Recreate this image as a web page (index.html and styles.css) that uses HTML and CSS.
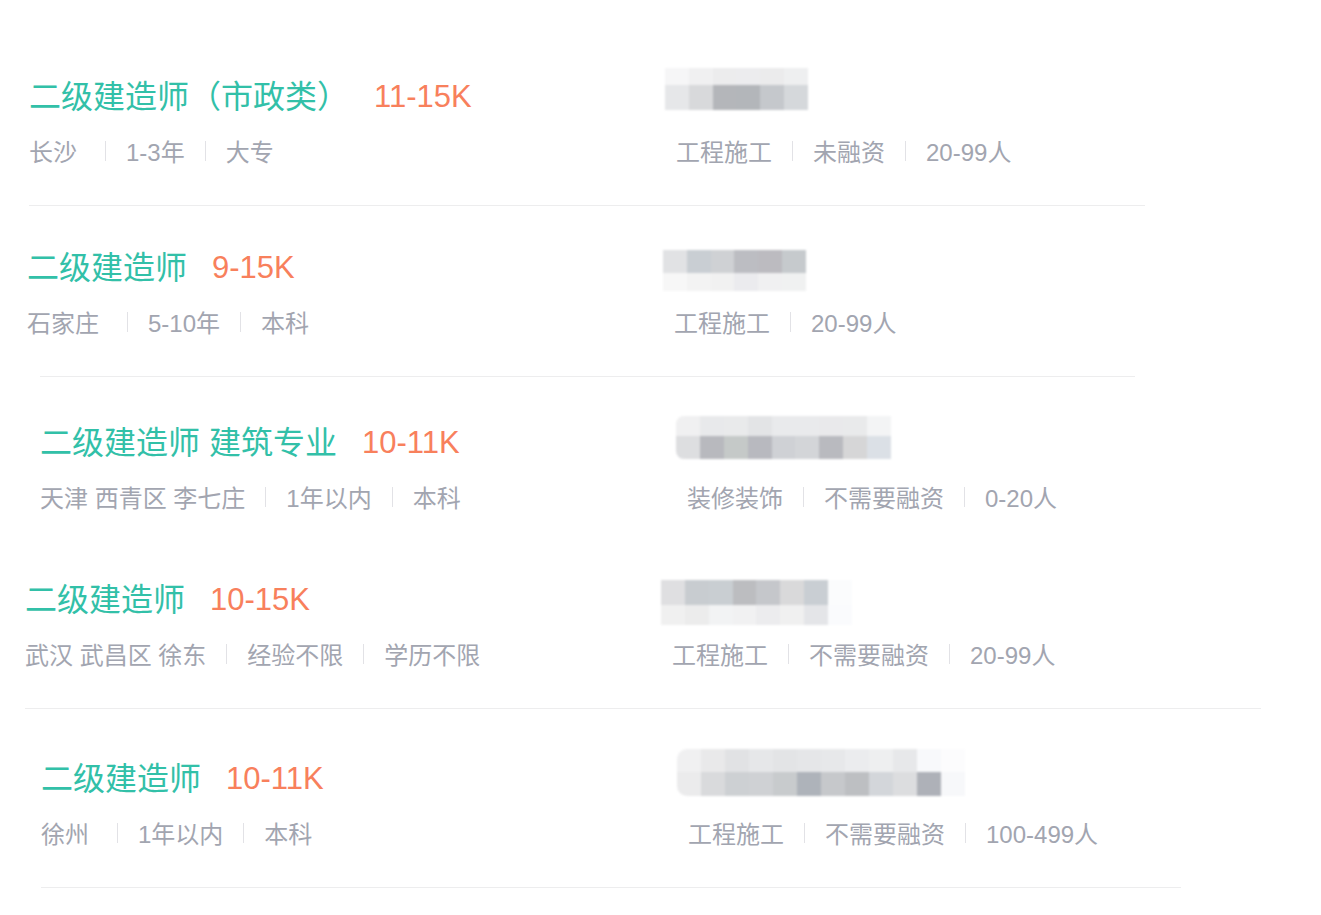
FILE: index.html
```html
<!DOCTYPE html>
<html lang="zh-CN">
<head>
<meta charset="utf-8">
<title>职位列表</title>
<link rel="stylesheet" href="styles.css">
</head>
<body>
<ul class="job-list">
  <li class="job job-1">
    <div class="job-body">
      <div class="job-main">
        <div class="title"><span class="name">二级建造师（市政类）</span><span class="salary">11-15K</span></div>
        <div class="meta"><span class="first">长沙</span><i class="sep"></i><span>1-3年</span><i class="sep"></i><span>大专</span></div>
      </div>
      <div class="job-side">
        <div class="logo-wrap"><div class="logo logo-1"><div class="row top"></div><div class="row bottom"></div></div></div>
        <div class="meta side-meta"><span>工程施工</span><i class="sep"></i><span>未融资</span><i class="sep"></i><span>20-99人</span></div>
      </div>
    </div>
    <div class="job-line"></div>
  </li>
  <li class="job job-2">
    <div class="job-body">
      <div class="job-main">
        <div class="title"><span class="name">二级建造师</span><span class="salary">9-15K</span></div>
        <div class="meta"><span class="first">石家庄</span><i class="sep"></i><span>5-10年</span><i class="sep"></i><span>本科</span></div>
      </div>
      <div class="job-side">
        <div class="logo-wrap"><div class="logo logo-2"><div class="row top"></div><div class="row bottom"></div></div></div>
        <div class="meta side-meta"><span>工程施工</span><i class="sep"></i><span>20-99人</span></div>
      </div>
    </div>
    <div class="job-line"></div>
  </li>
  <li class="job job-3">
    <div class="job-body">
      <div class="job-main">
        <div class="title"><span class="name">二级建造师 建筑专业</span><span class="salary">10-11K</span></div>
        <div class="meta"><span>天津 西青区 李七庄</span><i class="sep"></i><span>1年以内</span><i class="sep"></i><span>本科</span></div>
      </div>
      <div class="job-side">
        <div class="logo-wrap"><div class="logo logo-3"><div class="row top"></div><div class="row bottom"></div></div></div>
        <div class="meta side-meta"><span>装修装饰</span><i class="sep"></i><span>不需要融资</span><i class="sep"></i><span>0-20人</span></div>
      </div>
    </div>
    <div class="job-line"></div>
  </li>
  <li class="job job-4">
    <div class="job-body">
      <div class="job-main">
        <div class="title"><span class="name">二级建造师</span><span class="salary">10-15K</span></div>
        <div class="meta"><span>武汉 武昌区 徐东</span><i class="sep"></i><span>经验不限</span><i class="sep"></i><span>学历不限</span></div>
      </div>
      <div class="job-side">
        <div class="logo-wrap"><div class="logo logo-4"><div class="row top"></div><div class="row bottom"></div></div></div>
        <div class="meta side-meta"><span>工程施工</span><i class="sep"></i><span>不需要融资</span><i class="sep"></i><span>20-99人</span></div>
      </div>
    </div>
    <div class="job-line"></div>
  </li>
  <li class="job job-5">
    <div class="job-body">
      <div class="job-main">
        <div class="title"><span class="name">二级建造师</span><span class="salary">10-11K</span></div>
        <div class="meta"><span class="first">徐州</span><i class="sep"></i><span>1年以内</span><i class="sep"></i><span>本科</span></div>
      </div>
      <div class="job-side">
        <div class="logo-wrap"><div class="logo logo-5"><div class="row top"></div><div class="row bottom"></div></div></div>
        <div class="meta side-meta"><span>工程施工</span><i class="sep"></i><span>不需要融资</span><i class="sep"></i><span>100-499人</span></div>
      </div>
    </div>
    <div class="job-line"></div>
  </li>
</ul>
</body>
</html>
```

FILE: styles.css
```css
html, body {
  margin: 0;
  padding: 0;
  background: #ffffff;
}

body {
  font-family: "Liberation Sans", "Noto Sans CJK SC", sans-serif;
}

.job-list {
  list-style: none;
  margin: 0;
  padding: 0;
}

.job {
  display: flex;
  flex-direction: column;
}

.job-body {
  display: flex;
}

.job-main {
  flex: none;
  width: 636px;
}

.title {
  display: flex;
  align-items: center;
  height: 40px;
  white-space: nowrap;
}

.name {
  color: #32c0a8;
  font-size: 32px;
  line-height: 40px;
  margin-bottom: 1px;
}

.salary {
  color: #f8805c;
  font-size: 31px;
  margin-left: 25px;
}

.meta {
  display: flex;
  align-items: center;
  margin-top: 18px;
  height: 30px;
  font-size: 24px;
  color: #a2a5b0;
  white-space: nowrap;
}

.meta .first {
  margin-right: 8px;
}

.sep {
  display: inline-block;
  width: 0;
  height: 20px;
  border-left: 1px solid #e2e2e6;
  margin: 2px 20px 0;
}

.job-side {
  display: flex;
  flex-direction: column;
}

.side-meta {
  padding-left: 11px;
}

.logo-wrap {
  height: 40px;
}

.logo {
  display: flex;
  flex-direction: column;
  filter: blur(0.8px);
}

.logo .row {
  flex: none;
}

.job-line {
  height: 1px;
  margin-top: 40px;
  background: #ededee;
}

/* row 1 */
.job-1 {
  padding-top: 77px;
  margin-left: 29px;
  width: 1116px;
}
.logo-1 {
  margin-top: -9px;
  width: 143px;
}
.logo-1 .top {
  height: 17px;
  background: linear-gradient(90deg, #f6f6f7 0 16.66%, #f0f0f1 16.66% 33.33%, #ececed 33.33% 50%, #ececee 50% 66.66%, #ebebec 66.66% 83.33%, #eeeff0 83.33% 100%);
}
.logo-1 .bottom {
  height: 25px;
  background: linear-gradient(90deg, #e6e7e9 0 16.66%, #d8d9db 16.66% 33.33%, #b4b6ba 33.33% 50%, #b3b6ba 50% 66.66%, #c5c8cc 66.66% 83.33%, #d5d8db 83.33% 100%);
}

/* row 2 */
.job-2 {
  padding-top: 42px;
  margin-left: 27px;
}
.job-2 .job-line {
  margin-left: 13px;
  width: 1095px;
}
.logo-2 {
  margin-top: 2px;
  width: 143px;
}
.logo-2 .top {
  height: 23px;
  background: linear-gradient(90deg, #e1e2e4 0 16.66%, #c9ced3 16.66% 33.33%, #cfd1d4 33.33% 50%, #bcbdc2 50% 66.66%, #bcbbc0 66.66% 83.33%, #c6cacd 83.33% 100%);
}
.logo-2 .bottom {
  height: 18px;
  background: linear-gradient(90deg, #f7f7f7 0 16.66%, #f3f3f3 16.66% 33.33%, #f1f1f1 33.33% 50%, #ebebee 50% 66.66%, #f0f0f1 66.66% 83.33%, #f0f1f1 83.33% 100%);
}

/* row 3 */
.job-3 {
  padding-top: 46px;
  margin-left: 40px;
}
.job-3 .job-line {
  background: transparent;
}
.logo-3 {
  margin-top: -7px;
  width: 215px;
  border-radius: 8px 0 0 8px;
  overflow: hidden;
}
.logo-3 .top {
  height: 20px;
  background: linear-gradient(90deg, #f0f0f1 0 11.11%, #e8e9eb 11.11% 22.22%, #e9eaeb 22.22% 33.33%, #e3e4e6 33.33% 44.44%, #e9eaec 44.44% 55.55%, #e9eaec 55.55% 66.66%, #e9e9eb 66.66% 77.77%, #e9eaeb 77.77% 88.88%, #f3f4f5 88.88% 100%);
}
.logo-3 .bottom {
  height: 23px;
  background: linear-gradient(90deg, #dddee0 0 11.11%, #b8b9be 11.11% 22.22%, #c5c9c8 22.22% 33.33%, #b8b9bf 33.33% 44.44%, #cfd1d5 44.44% 55.55%, #d3d5d8 55.55% 66.66%, #b9babf 66.66% 77.77%, #d6d6d7 77.77% 88.88%, #dbe0e6 88.88% 100%);
}

/* row 4 */
.job-4 {
  padding-top: 28px;
  margin-left: 25px;
  width: 1236px;
}
.logo-4 {
  margin-top: 0;
  width: 191px;
}
.logo-4 .top {
  height: 25px;
  background: linear-gradient(90deg, #dfdfe1 0 12.5%, #c8ccd0 12.5% 25%, #c9ced2 25% 37.5%, #bcbdc0 37.5% 50%, #c5c7cb 50% 62.5%, #d9d9da 62.5% 75%, #c9ced3 75% 87.5%, #fbfcfd 87.5% 100%);
}
.logo-4 .bottom {
  height: 20px;
  background: linear-gradient(90deg, #f0f0f0 0 12.5%, #ececec 12.5% 25%, #f2f3f4 25% 37.5%, #f1f1f2 37.5% 50%, #ececee 50% 62.5%, #f0f0f0 62.5% 75%, #e4e5e8 75% 87.5%, #fafbfd 87.5% 100%);
}

/* row 5 */
.job-5 {
  padding-top: 50px;
  margin-left: 41px;
  width: 1140px;
}
.logo-5 {
  margin-top: -10px;
  width: 288px;
  border-radius: 10px 0 0 10px;
  overflow: hidden;
}
.logo-5 .top {
  height: 23px;
  background: linear-gradient(90deg, #f0f0f1 0 8.33%, #e9e9ea 8.33% 16.66%, #e1e2e4 16.66% 25%, #e6e7e9 25% 33.33%, #e3e4e6 33.33% 41.66%, #e5e6e8 41.66% 50%, #e7e8ea 50% 58.33%, #ebecee 58.33% 66.66%, #eeeff0 66.66% 75%, #e7e8ea 75% 83.33%, #f8f9fb 83.33% 91.66%, #fcfcfd 91.66% 100%);
}
.logo-5 .bottom {
  height: 24px;
  background: linear-gradient(90deg, #ebebec 0 8.33%, #d9dadc 8.33% 16.66%, #cdd0d3 16.66% 25%, #cfd1d4 25% 33.33%, #c8cbcd 33.33% 41.66%, #aeb3ba 41.66% 50%, #c6c8cb 50% 58.33%, #bdbfc2 58.33% 66.66%, #d3d6da 66.66% 75%, #dcdddf 75% 83.33%, #aeb1b8 83.33% 91.66%, #f7f8fa 91.66% 100%);
}
```
